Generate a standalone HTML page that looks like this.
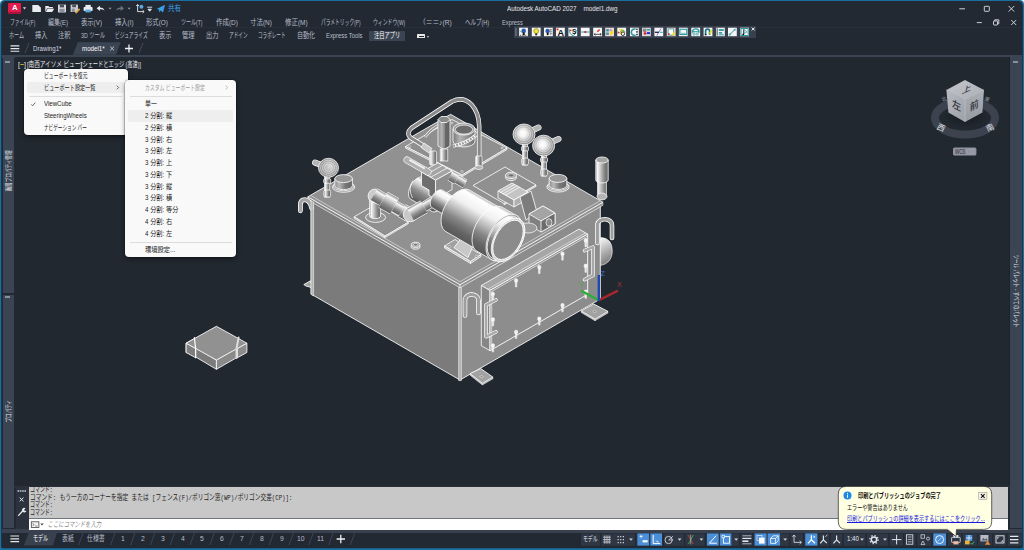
<!DOCTYPE html>
<html lang="ja"><head><meta charset="utf-8"><title>Autodesk AutoCAD 2027 model1.dwg</title>
<style>
*{box-sizing:border-box;margin:0;padding:0}
html,body{width:1024px;height:550px;overflow:hidden;background:#222933}
body{position:relative;font-family:"Liberation Sans","Noto Sans CJK JP",sans-serif;font-size:7.5px;color:#c3c8d2}
.a{position:absolute}
.t{position:absolute;white-space:nowrap;line-height:1;transform-origin:0 50%}
.strip{position:absolute;background:#3b4453}
.menu{position:absolute;background:#f9f9f9;border-radius:4px;box-shadow:0 0 0 .6px rgba(0,0,0,.3),0 2px 5px rgba(0,0,0,.4)}
.sep{position:absolute;height:1px;background:#dadada}
.hl{position:absolute;background:#eeeeee;border-radius:2px}
.sb{position:absolute;top:532.5px;height:13px;background:#4a90d9}
svg{position:absolute;left:0;top:0;overflow:visible}
</style></head><body>
<div class="a" style="left:2px;top:27.2px;width:1020px;height:0.8px;background:#282f3a;"></div>
<div class="a" style="left:2px;top:54.5px;width:1020px;height:3.5px;background:#3b4453;"></div>
<div class="a" style="left:14.5px;top:57.4px;width:995.6px;height:428.1px;background:#1d232b;"></div>
<div class="a" style="left:15.4px;top:57.4px;width:993.4px;height:428.1px;background:#212830;"></div>
<div class="a" style="left:2.6px;top:58px;width:11.9px;height:234.8px;background:#3b4453;"></div>
<div class="a" style="left:2.6px;top:294.9px;width:11.9px;height:233.1px;background:#3b4453;"></div>
<div class="a" style="left:5px;top:61.2px;width:5.2px;height:1.6px;background:#8990a0;"></div>
<div class="a" style="left:5px;top:296.3px;width:5.2px;height:1.6px;background:#8990a0;"></div>
<div class="a" style="left:1010.1px;top:58px;width:11.9px;height:470px;background:#3b4453;"></div>
<div class="a" style="left:1013px;top:61.2px;width:5.2px;height:1.6px;background:#8990a0;"></div>
<div class="a" style="left:369px;top:30.5px;width:36.3px;height:10.8px;background:#3b4453;"></div>
<div class="a" style="left:416.8px;top:34px;width:8.4px;height:4.2px;background:#e8e8e8;border-radius:.5px"></div>
<div class="a" style="left:418.5px;top:35.6px;width:5px;height:1px;background:#222933;"></div>
<div class="a" style="left:427px;top:35.5px;border:1.6px solid transparent;border-top:2px solid #d0d4dc"></div>
<svg width="1024" height="550" viewBox="0 0 1024 550"><polygon points="73,54.8 77.8,42.3 120.7,42.3 116,54.8" fill="#3b4453"/><g stroke="#e6e8ec" stroke-width="1.1"><path d="M10.5 45.9h8.8M10.5 48.6h8.8M10.5 51.3h8.8"/></g><g stroke="#4a5262" stroke-width=".8"><path d="M25 53l4-10M139 53l4-10" /></g><path d="M110.2 46.6l3.8 3.8M114 46.6l-3.8 3.8" stroke="#c3c8d2" stroke-width="1"/><path d="M125 48.5h8M129 44.5v8" stroke="#f0f2f5" stroke-width="1.3"/></svg>
<div class="a" style="left:513.7px;top:26.4px;width:242.4px;height:11.4px;background:#38404e;"></div>
<div class="a" style="left:515px;top:27.8px;width:1.5px;height:8.4px;background:#5c6474;"></div>
<svg width="1024" height="550" viewBox="0 0 1024 550"><g transform="translate(519.1 27.7)"><rect width="8.8" height="8.5" fill="#f6f6f6"/><circle cx="4.6" cy="3.2" r="2.3" fill="#2a5ab0"/><rect x="3.6" y="5" width="2" height="2.4" fill="#111"/><path d="M.8 7.6h7.2" stroke="#111" stroke-width=".8" stroke-dasharray="1 .8"/><path d="M1 3l2 2" stroke="#2a9a50" stroke-width=".8"/></g><g transform="translate(531.8 27.7)"><rect width="8.8" height="8.5" fill="#f6f6f6"/><circle cx="4.4" cy="3.4" r="2.5" fill="#f2e23a" stroke="#7a7a20" stroke-width=".6"/><rect x="3.4" y="5.8" width="2" height="1.8" fill="#222"/></g><g transform="translate(544 27.7)"><rect width="8.8" height="8.5" fill="#f6f6f6"/><circle cx="3.6" cy="3.2" r="2.2" fill="#2a5ab0"/><rect x="2.8" y="5" width="1.8" height="2.4" fill="#111"/><path d="M5.6 2h2.6M5.6 4h2.6M5.6 6h2.6M6.8 1v6.4" stroke="#555" stroke-width=".5"/></g><g transform="translate(556 27.7)"><rect width="8.8" height="8.5" fill="#f6f6f6"/><text x="1.6" y="7.9" font-size="9" font-weight="bold" fill="#111" font-family="Liberation Sans,sans-serif">A</text><rect x=".6" y=".8" width="1.8" height="1.8" fill="#e02020"/></g><g transform="translate(568.4 27.7)"><rect width="8.8" height="8.5" fill="#f6f6f6"/><path d="M.8 1.6Q1 7 5 8Q7.6 6 8 2.4" fill="none" stroke="#2a9aa0" stroke-width="1"/><text x="3.6" y="6.8" font-size="6.5" font-weight="bold" fill="#111" font-family="Liberation Sans,sans-serif">S</text><rect x="1.6" y="2" width="1.4" height="1.4" fill="#e02020"/></g><g transform="translate(580.8 27.7)"><rect width="8.8" height="8.5" fill="#f6f6f6"/><path d="M.4 4.3h8" stroke="#2a9aa0" stroke-width="1"/><rect x="3.6" y="3.4" width="1.8" height="1.8" fill="#e02020"/></g><g transform="translate(593.2 27.7)"><rect width="8.8" height="8.5" fill="#f6f6f6"/><path d="M3.6 3.6l2.4-2.2 1 1-2.4 2.2z" fill="#e03030"/><path d="M1 6.6h7M1 6.6l1.2-1M1 6.6l1.2 1M8 6.6l-1.2-1M8 6.6l-1.2 1" stroke="#111" stroke-width=".7" fill="none"/></g><g transform="translate(605.2 27.7)"><rect width="8.8" height="8.5" fill="#f4d4d4"/><rect x="1" y="1.4" width="2.6" height="2.4" fill="#2a9aa0"/><rect x="1" y="4.8" width="2.6" height="2.4" fill="#2a9aa0"/><path d="M4.6 5.6l3-4 .2 2.6 1 .2-3 3.4z" fill="#f0e020"/><rect x="4.4" y="1.4" width="2" height="2" fill="#8ac"/></g><g transform="translate(617.3 27.7)"><rect width="8.8" height="8.5" fill="#f6f6f6"/><path d="M1.6 1l4.4.6 1.6 2.2-4 2.8z" fill="#f0e040"/><path d="M2 5.6l3-3.4 3 2" fill="none" stroke="#2a9aa0" stroke-width=".8"/><circle cx="5.6" cy="6" r="1.8" fill="none" stroke="#111" stroke-width=".8"/><rect x=".4" y="4" width="1.6" height="1.6" fill="#e02020"/></g><g transform="translate(630 27.7)"><rect width="8.8" height="8.5" fill="#f6f6f6"/><path d="M5.6 1.6A3 3.2 0 1 0 5.6 7.4" fill="none" stroke="#2a9aa0" stroke-width="1.6"/><circle cx="7" cy="1.6" r=".8" fill="#111"/><circle cx="7" cy="4.2" r=".8" fill="#111"/><circle cx="7" cy="6.8" r=".8" fill="#111"/></g><g transform="translate(642 27.7)"><rect width="8.8" height="8.5" fill="#d8d8d8"/><rect x=".8" y="1" width="3.6" height="3" fill="#888"/><path d="M3 3.6v3.6M1.6 5.6h3" stroke="#e02020" stroke-width="1.2"/><rect x="5" y="4.4" width="3" height="2" fill="#2030e0"/><rect x="5" y="1.4" width="3" height="1.4" fill="#2a9aa0"/></g><g transform="translate(654.4 27.7)"><rect width="8.8" height="8.5" fill="#f6f6f6"/><path d="M.6 4.6h4" stroke="#222" stroke-width="1.3"/><path d="M5.4 4.6h3" stroke="#2a9aa0" stroke-width=".9"/><path d="M2.4 8L6.6.8" stroke="#4050e0" stroke-width=".7"/></g><g transform="translate(666.8 27.7)"><rect width="8.8" height="8.5" fill="#f4d4d4"/><path d="M1.4 1.2h5.4v6.2H1.4z" fill="#fff" stroke="#2a9aa0" stroke-width=".8"/><path d="M5 7l2.6-4 .2 2 .8.2-2.4 3.2z" fill="#f0e020"/><rect x="1.2" y="5.6" width="1.6" height="1.6" fill="#e02020"/></g><g transform="translate(678.9 27.7)"><rect width="8.8" height="8.5" fill="#f6f6f6"/><rect x="1" y="1.6" width="6.8" height="5.2" fill="none" stroke="#2a9aa0" stroke-width="1.1"/><path d="M2 5.6h4.6" stroke="#2a9aa0" stroke-width=".6"/></g><g transform="translate(691.3 27.7)"><rect width="8.8" height="8.5" fill="#f6f6f6"/><path d="M1.2 5V4A3.2 2.8 0 0 1 7.6 4V5" fill="none" stroke="#2a9aa0" stroke-width="1.3"/><path d="M1.2 4h6.4" stroke="#2a9aa0" stroke-width="1"/><circle cx="2.8" cy="6.4" r="1.1" fill="none" stroke="#2a9aa0" stroke-width=".7"/><circle cx="6" cy="6.4" r="1.1" fill="none" stroke="#2a9aa0" stroke-width=".7"/></g><g transform="translate(703.6 27.7)"><rect width="8.8" height="8.5" fill="#f6f6f6"/><path d="M2 7V3.4A2 2 0 0 1 6 3.4V7" fill="none" stroke="#1a7a80" stroke-width="1.7"/><path d="M5.6 5l2.4-3.4.2 2 .6.2-2.4 3z" fill="#f0e020"/><rect x="1.2" y="6.4" width="1.6" height="1.2" fill="#111"/></g><g transform="translate(716 27.7)"><rect width="8.8" height="8.5" fill="#f6f6f6"/><rect x=".4" y=".6" width="1.6" height="7.4" fill="#888"/><rect x="2.8" y="1.4" width="5" height="1.8" fill="#2a9aa0"/><rect x="2.8" y="4.4" width="3.4" height="1.6" fill="#2a9aa0"/><rect x="2.8" y="6.6" width="5" height="1" fill="#2a9aa0"/></g><g transform="translate(728 27.7)"><rect width="8.8" height="8.5" fill="#f6f6f6"/><path d="M1.4 7.2L7.4 1.4" stroke="#2a9aa0" stroke-width="1"/><circle cx="1.8" cy="6.8" r=".9" fill="none" stroke="#2a9aa0" stroke-width=".6"/><path d="M7.6 1.2l-2 .4 1.6 1.6z" fill="#2a9aa0"/></g><g transform="translate(740.2 27.7)"><rect width="8.8" height="8.5" fill="#f6f6f6"/><rect x=".8" y=".8" width="7.2" height="7" fill="none" stroke="#2a9aa0" stroke-width="1"/><path d="M3.6 1.6v5" stroke="#111" stroke-width="1"/><path d="M3.6 1.8l3.4 2.4-3.4 1.6" fill="none" stroke="#2a9aa0" stroke-width=".7"/><circle cx="3" cy="6.6" r=".9" fill="#111"/></g></svg>
<svg width="1024" height="550" viewBox="0 0 1024 550"><g stroke="#dfe3ea" stroke-width=".9" fill="none"><path d="M959.3 8.8h5.7"/><rect x="984.3" y="6.3" width="5" height="5" rx=".6"/><path d="M1008.6 6l5.6 5.6M1014.2 6l-5.6 5.6"/><path d="M976.8 22.6h5"/><rect x="993.5" y="21" width="4" height="4" rx=".5"/><path d="M994.8 21v-1.2h4v4h-1.3"/><path d="M1011.2 20l5 5M1016.2 20l-5 5"/><path d="M751.8 27.6l2.8 2.8M754.6 27.6l-2.8 2.8" stroke="#fff" stroke-width="1"/></g></svg>
<div class="a" style="left:8.1px;top:2.8px;width:12.5px;height:11.2px;background:linear-gradient(#e41b52 0,#e01a4f 82%,#a8123b 83%);border-radius:1px"></div>
<svg width="1024" height="550" viewBox="0 0 1024 550"><path d="M22.8 7.2h3.4l-1.7 2.2z" fill="#d0d4dc"/></svg>
<svg width="1024" height="550" viewBox="0 0 1024 550"><path d="M32.3 5.1h5.8l2.8 2.5v4.3h-8.6z" fill="#e9ebee"/><path d="M45.3 6h3l1 1h3.6v1.2h-5.8l-1.8 3.7z M47.6 8.7h6.6l-2 3.3h-6.4z" fill="#e9ebee"/><rect x="58" y="4.6" width="8" height="7.8" fill="#d8dbe0"/><rect x="59.8" y="4.6" width="4.2" height="2.8" fill="#4a505c"/><rect x="59.4" y="8.8" width="5.2" height="3.6" fill="#8a8f99"/><rect x="70.6" y="4.6" width="7.4" height="7.4" fill="#c8ccd3"/><rect x="72.2" y="4.6" width="3.8" height="2.6" fill="#4a505c"/><rect x="71.8" y="8.6" width="3" height="3.4" fill="#8a8f99"/><path d="M75 12.6l4-4.3 1.2 1.2-4 4.3z" fill="#e8a33d"/><rect x="83.6" y="7" width="9" height="4" rx=".8" fill="#e9ebee"/><rect x="85.4" y="4.9" width="5.4" height="2.4" fill="#e9ebee"/><rect x="85.4" y="9.6" width="5.4" height="2.8" fill="#58a8e0"/><path d="M96.6 8.3l3.3-2.6v1.7c2.6 0 4.2 1.2 4.6 3.4-1-1.2-2.5-1.6-4.6-1.6v1.7z" fill="#e9ebee"/><path d="M124 8.3l-3.3-2.6v1.7c-2.6 0-4.2 1.2-4.6 3.4 1-1.2 2.5-1.6 4.6-1.6v1.7z" fill="#6b7382"/><path d="M108.6 7.7h3l-1.5 1.9z M127.6 7.7h3l-1.5 1.9z" fill="#9aa1ae"/><path d="M137.6 4.6v7h6.4M136.2 6l1.4-1.5 1.4 1.5M142.6 10.2l1.5 1.4-1.5 1.4" stroke="#e9ebee" stroke-width=".9" fill="none"/><circle cx="141.4" cy="6.8" r="2" fill="#58a8e0"/><path d="M147.2 7.2h5M148 9.2h3.4l-1.7 2z" stroke="#e9ebee" stroke-width=".9" fill="#e9ebee"/><path d="M156.6 9l8.4-4.2-2 7.6-2.3-2-1.4 1.8-.4-2.6z" fill="#3aa0ea"/></svg>
<div class="a" style="left:2px;top:528.9px;width:1020px;height:4px;background:#39414f;"></div>
<div class="a" style="left:14.3px;top:485.5px;width:995.5px;height:2px;background:#2a303b;"></div>
<div class="a" style="left:15.9px;top:487.4px;width:13.1px;height:41.5px;background:#2b323e;"></div>
<div class="a" style="left:29px;top:487.4px;width:978.6px;height:31px;background:#c8c8c8;"></div>
<div class="a" style="left:29px;top:518.4px;width:978.6px;height:0.9px;background:#70757e;"></div>
<div class="a" style="left:29px;top:519.3px;width:978.6px;height:10.3px;background:#ffffff;"></div>
<svg width="1024" height="550" viewBox="0 0 1024 550"><path d="M17.5 491h9" stroke="#c5c9d1" stroke-width="1.3" stroke-dasharray="1.6 .7"/><path d="M19.7 497.6l3.8 3.8M23.5 497.6l-3.8 3.8" stroke="#e8eaee" stroke-width="1"/><path d="M18.6 515.4l4.3-4.6" stroke="#e8eaee" stroke-width="1.3" stroke-linecap="round"/><path d="M25.6 508.2a2.3 2.3 0 1 0 .9 2.6l-1.7.2-.6-1.3z" fill="#e8eaee"/><rect x="31.3" y="521.8" width="7.6" height="5.6" fill="#f4f4f4" stroke="#444" stroke-width=".8"/><path d="M32.6 523.6l1.6 1-1.6 1M35 526h2.4" stroke="#444" stroke-width=".6" fill="none"/><path d="M40.3 523.6h3.4l-1.7 2z" fill="#444"/></svg>
<div class="a" style="left:2px;top:532.9px;width:1020px;height:14.6px;background:#222933;"></div>
<svg width="1024" height="550" viewBox="0 0 1024 550"><polygon points="23.9,545.4 28.7,532.6 57,532.6 53,545.4" fill="#39414f"/><g stroke="#e6e8ec" stroke-width="1.2"><path d="M10.4 536h8.7M10.4 538.8h8.7M10.4 541.6h8.7"/></g><g stroke="#434b5a" stroke-width=".8"><path d="M78.6 545l4.4-12"/><path d="M110.6 545l4.4-12"/><path d="M130.6 545l4.4-12"/><path d="M150.4 545l4.4-12"/><path d="M170.2 545l4.4-12"/><path d="M190.0 545l4.4-12"/><path d="M209.8 545l4.4-12"/><path d="M229.6 545l4.4-12"/><path d="M249.4 545l4.4-12"/><path d="M269.2 545l4.4-12"/><path d="M289.0 545l4.4-12"/><path d="M308.8 545l4.4-12"/><path d="M328.8 545l4.4-12"/><path d="M350.3 545l4.4-12"/></g><path d="M336.6 539h8.4M340.8 534.8v8.4" stroke="#eef0f3" stroke-width="1.3"/><rect x="581" y="533.6" width="441" height="12.2" fill="#2f3745"/><rect x="637.4" y="533.4" width="11.6" height="12.2" fill="#4a8fd8"/><rect x="650.4" y="533.4" width="11.6" height="12.2" fill="#4a8fd8"/><rect x="707" y="533.4" width="11.7" height="12.2" fill="#4a8fd8"/><rect x="720" y="533.4" width="11.3" height="12.2" fill="#4a8fd8"/><rect x="754.6" y="533.4" width="11.9" height="12.2" fill="#4a8fd8"/><rect x="767.7" y="533.4" width="12.3" height="12.2" fill="#4a8fd8"/><rect x="805.3" y="533.4" width="12.1" height="12.2" fill="#4a8fd8"/><rect x="933.3" y="533.4" width="12.7" height="12.2" fill="#4a8fd8"/><path d="M629.1 538.4h3.8l-1.9 2.3z" fill="#d4d8e0"/><path d="M677.7 538.4h3.8l-1.9 2.3z" fill="#d4d8e0"/><path d="M699.5 538.4h3.8l-1.9 2.3z" fill="#d4d8e0"/><path d="M734.3000000000001 538.4h3.8l-1.9 2.3z" fill="#d4d8e0"/><path d="M783.3000000000001 538.4h3.8l-1.9 2.3z" fill="#d4d8e0"/><path d="M860.1 538.4h3.8l-1.9 2.3z" fill="#d4d8e0"/><path d="M883.1 538.4h3.8l-1.9 2.3z" fill="#d4d8e0"/><path d="M603 537.2h8M603 539.6h8M603 542h8M604.8 535.4v8.4M607 535.4v8.4M609.2 535.4v8.4" stroke="#e4e7ec" stroke-width=".7"/><path d="M617.6 536.6h6.4M617.6 539.6h6.4M617.6 542.6h6.4" stroke="#e4e7ec" stroke-width="1.1" stroke-dasharray="1.1 1.5"/><path d="M639.6 536.4h3M641.1 534.9v3" stroke="#fff" stroke-width=".8"/><rect x="642.6" y="540.2" width="5" height="2.2" fill="#fff"/><path d="M653.2 535v8.6h7" stroke="#fff" stroke-width="1" fill="none"/><path d="M655.6 541.2h2.4v2.4" stroke="#fff" stroke-width=".6" fill="none"/><circle cx="668.6" cy="540" r="3.6" fill="none" stroke="#e4e7ec" stroke-width=".8"/><path d="M668.6 540l4.4-3.8M668.6 540h4.6" stroke="#e4e7ec" stroke-width=".7"/><path d="M688 535l5.2 9" stroke="#d04040" stroke-width=".9"/><path d="M693.4 535l-5 9" stroke="#40b050" stroke-width=".9"/><path d="M690.7 534.6v9.8" stroke="#c8ccd4" stroke-width=".6"/><path d="M709.4 543.2l6.8-7.6M709.4 543.2h7.4" stroke="#fff" stroke-width="1" fill="none"/><rect x="723.4" y="536.6" width="6" height="6.6" fill="none" stroke="#fff" stroke-width=".9"/><rect x="722" y="535.2" width="2.6" height="2.6" fill="#4a8fd8" stroke="#fff" stroke-width=".7"/><path d="M742.4 535.8h9" stroke="#e4e7ec" stroke-width=".7"/><path d="M742.4 538.4h9" stroke="#e4e7ec" stroke-width="1.2"/><path d="M742.4 541.2h6" stroke="#e4e7ec" stroke-width="1.6"/><path d="M742.4 543.8h9" stroke="#e4e7ec" stroke-width=".7"/><rect x="757" y="535.6" width="5" height="5" fill="none" stroke="#dfe9f6" stroke-width=".7"/><rect x="759" y="537.6" width="5.6" height="6" fill="#fff"/><path d="M770.6 538.4l2.6-2.6h5v5l-2.6 2.6h-5z M770.6 538.4h5v5M775.6 538.4l2.6-2.6" fill="none" stroke="#fff" stroke-width=".8"/><path d="M794 535v7.4h7.4M792.4 536.8l1.6-1.8 1.6 1.8M799.6 540.8l1.8 1.6-1.8 1.6" fill="none" stroke="#e4e7ec" stroke-width=".8"/><path d="M811.4 535.2v4.6l-3.4 3.6M811.4 539.8l3.6 3.4" stroke="#fff" stroke-width="1.3" fill="none"/><path d="M813.6 535.6l1.8 1.4-1.8 1z" fill="#fff"/><path d="M823.4 535.4v4.4l-3.2 3.6M823.4 539.8l3.4 3.4" stroke="#e4e7ec" stroke-width="1.2" fill="none"/><path d="M825.4 536.6l2-1.6" stroke="#e4e7ec" stroke-width=".8"/><path d="M836.6 535.4v4.4l-3.2 3.6M836.6 539.8l3.4 3.4" stroke="#e4e7ec" stroke-width="1.2" fill="none"/><circle cx="874" cy="539.6" r="2.7" fill="none" stroke="#e4e7ec" stroke-width="1.5"/><circle cx="874" cy="539.6" r="4.1" fill="none" stroke="#e4e7ec" stroke-width="1.3" stroke-dasharray="1.3 1.92"/><path d="M891.8 539.6h9.6M896.6 534.8v9.6" stroke="#e4e7ec" stroke-width="1"/><rect x="906.6" y="534.8" width="6.2" height="9.4" fill="none" stroke="#e4e7ec" stroke-width=".8"/><path d="M907.8 537h3.8M907.8 539.4h3.8M907.8 541.8h3.8" stroke="#e4e7ec" stroke-width=".7"/><rect x="921" y="534.8" width="3.4" height="3.4" fill="none" stroke="#e4e7ec" stroke-width=".7"/><circle cx="928" cy="538.6" r="1.5" fill="none" stroke="#e4e7ec" stroke-width=".7"/><path d="M921 544.6l1.9-3.6 1.9 3.6z" fill="none" stroke="#e4e7ec" stroke-width=".7"/><circle cx="939.6" cy="539.6" r="4" fill="none" stroke="#fff" stroke-width=".9"/><path d="M937.6 541.6l4-4" stroke="#dfe9f6" stroke-width=".7"/><rect x="951.6" y="537.4" width="8.6" height="5" rx=".6" fill="none" stroke="#e4e7ec" stroke-width=".8"/><rect x="953.4" y="535" width="5" height="2.4" fill="#e4e7ec"/><rect x="953.4" y="541.2" width="5" height="3.2" fill="#f0b8a0"/><rect x="965.8" y="535" width="6.4" height="6" fill="#4a8fd8"/><path d="M969 535v6M965.8 538h6.4" stroke="#fff" stroke-width=".7"/><rect x="965" y="540.4" width="4.6" height="4" fill="#e8b040"/><path d="M970.6 543l1.3 1.3 2.2-2.6" stroke="#40c060" stroke-width=".9" fill="none"/><rect x="980.4" y="535" width="8" height="6.4" fill="#b8bcc4"/><path d="M981.4 540.4l2-2.6 1.6 1.6 1.4-1.4 1.6 2.4z" fill="#5a6270"/><path d="M985 544.8l2.6-4.4 2.6 4.4z" fill="#e88a3a"/><rect x="996" y="535.8" width="8" height="7.2" fill="none" stroke="#e4e7ec" stroke-width=".9"/><path d="M997.4 539v-1.8h1.8M1002.6 540v1.8h-1.8" stroke="#e4e7ec" stroke-width=".7" fill="none"/><path d="M1010 536.4h8.4M1010 539.6h8.4M1010 542.8h8.4" stroke="#e4e7ec" stroke-width="1.2"/><g stroke="#222933" stroke-width="1.4"><path d="M580.2 533v13"/><path d="M600.6 533v13"/><path d="M635.6 533v13"/><path d="M663.4 533v13"/><path d="M684.6 533v13"/><path d="M705.4 533v13"/><path d="M739.8 533v13"/><path d="M753 533v13"/><path d="M789.6 533v13"/><path d="M803.6 533v13"/><path d="M818.8 533v13"/><path d="M830 533v13"/><path d="M843 533v13"/><path d="M866.2 533v13"/><path d="M889 533v13"/><path d="M903.8 533v13"/><path d="M916.4 533v13"/><path d="M932 533v13"/><path d="M947.4 533v13"/><path d="M962 533v13"/><path d="M977.6 533v13"/><path d="M992.6 533v13"/><path d="M1007 533v13"/></g></svg>
<svg width="1024" height="550" viewBox="0 0 1024 550"><defs><linearGradient id="g1" gradientUnits="userSpaceOnUse" x1="600.0" y1="240.0" x2="612.0" y2="262.0"><stop offset="0" stop-color="#f0f0f0"/><stop offset="0.5" stop-color="#b0b0b0"/><stop offset="1" stop-color="#787878"/></linearGradient><linearGradient id="g2" gradientUnits="userSpaceOnUse" x1="453.0" y1="0.0" x2="476.0" y2="0.0"><stop offset="0" stop-color="#7a7a7a"/><stop offset="0.3" stop-color="#b4b4b4"/><stop offset="1" stop-color="#6a6a6a"/></linearGradient><linearGradient id="g3" gradientUnits="userSpaceOnUse" x1="438.0" y1="0.0" x2="450.0" y2="0.0"><stop offset="0" stop-color="#8a8a8a"/><stop offset="0.3" stop-color="#b4b4b4"/><stop offset="0.55" stop-color="#8a8a8a"/><stop offset="0.56" stop-color="#6a6a6a"/><stop offset="1" stop-color="#606060"/></linearGradient><linearGradient id="g4" gradientUnits="userSpaceOnUse" x1="440.0" y1="0.0" x2="448.0" y2="0.0"><stop offset="0" stop-color="#8a8a8a"/><stop offset="0.16" stop-color="#fafafa"/><stop offset="0.36" stop-color="#cccccc"/><stop offset="0.68" stop-color="#868686"/><stop offset="1" stop-color="#626262"/></linearGradient><linearGradient id="g5" gradientUnits="userSpaceOnUse" x1="475.5" y1="0.0" x2="482.0" y2="0.0"><stop offset="0" stop-color="#8a8a8a"/><stop offset="0.16" stop-color="#fafafa"/><stop offset="0.36" stop-color="#cccccc"/><stop offset="0.68" stop-color="#868686"/><stop offset="1" stop-color="#626262"/></linearGradient><linearGradient id="g6" gradientUnits="userSpaceOnUse" x1="429.5" y1="0.0" x2="437.0" y2="0.0"><stop offset="0" stop-color="#8a8a8a"/><stop offset="0.16" stop-color="#fafafa"/><stop offset="0.36" stop-color="#cccccc"/><stop offset="0.68" stop-color="#868686"/><stop offset="1" stop-color="#626262"/></linearGradient><linearGradient id="g7" gradientUnits="userSpaceOnUse" x1="324.2" y1="0.0" x2="330.2" y2="0.0"><stop offset="0" stop-color="#8a8a8a"/><stop offset="0.16" stop-color="#fafafa"/><stop offset="0.36" stop-color="#cccccc"/><stop offset="0.68" stop-color="#868686"/><stop offset="1" stop-color="#626262"/></linearGradient><radialGradient id="g8" gradientUnits="userSpaceOnUse" cx="329.5" cy="166.8" r="10.0"><stop offset="0" stop-color="#dcdcdc"/><stop offset="0.5" stop-color="#b0b0b0"/><stop offset="1" stop-color="#8e8e8e"/></radialGradient><linearGradient id="g9" gradientUnits="userSpaceOnUse" x1="334.6" y1="0.0" x2="352.6" y2="0.0"><stop offset="0" stop-color="#8a8a8a"/><stop offset="0.25" stop-color="#b8b8b8"/><stop offset="0.6" stop-color="#777"/><stop offset="1" stop-color="#666"/></linearGradient><linearGradient id="g10" gradientUnits="userSpaceOnUse" x1="369.5" y1="0.0" x2="381.0" y2="0.0"><stop offset="0" stop-color="#8a8a8a"/><stop offset="0.16" stop-color="#fafafa"/><stop offset="0.36" stop-color="#cccccc"/><stop offset="0.68" stop-color="#868686"/><stop offset="1" stop-color="#626262"/></linearGradient><linearGradient id="g11" gradientUnits="userSpaceOnUse" x1="423.0" y1="177.6" x2="411.0" y2="198.4"><stop offset="0" stop-color="#8a8a8a"/><stop offset="0.14" stop-color="#f6f6f6"/><stop offset="0.34" stop-color="#cfcfcf"/><stop offset="0.6" stop-color="#8c8c8c"/><stop offset="1" stop-color="#5c5c5c"/></linearGradient><linearGradient id="g12" gradientUnits="userSpaceOnUse" x1="377.2" y1="189.0" x2="370.8" y2="200.0"><stop offset="0" stop-color="#8a8a8a"/><stop offset="0.16" stop-color="#fafafa"/><stop offset="0.36" stop-color="#cccccc"/><stop offset="0.68" stop-color="#868686"/><stop offset="1" stop-color="#626262"/></linearGradient><linearGradient id="g13" gradientUnits="userSpaceOnUse" x1="387.3" y1="192.2" x2="378.7" y2="207.2"><stop offset="0" stop-color="#8a8a8a"/><stop offset="0.16" stop-color="#fafafa"/><stop offset="0.36" stop-color="#cccccc"/><stop offset="0.68" stop-color="#868686"/><stop offset="1" stop-color="#626262"/></linearGradient><linearGradient id="g14" gradientUnits="userSpaceOnUse" x1="397.3" y1="201.4" x2="391.7" y2="211.2"><stop offset="0" stop-color="#8a8a8a"/><stop offset="0.16" stop-color="#fafafa"/><stop offset="0.36" stop-color="#cccccc"/><stop offset="0.68" stop-color="#868686"/><stop offset="1" stop-color="#626262"/></linearGradient><linearGradient id="g15" gradientUnits="userSpaceOnUse" x1="405.4" y1="204.7" x2="398.6" y2="216.5"><stop offset="0" stop-color="#8a8a8a"/><stop offset="0.16" stop-color="#fafafa"/><stop offset="0.36" stop-color="#cccccc"/><stop offset="0.68" stop-color="#868686"/><stop offset="1" stop-color="#626262"/></linearGradient><linearGradient id="g16" gradientUnits="userSpaceOnUse" x1="407.2" y1="208.8" x2="413.8" y2="220.2"><stop offset="0" stop-color="#8a8a8a"/><stop offset="0.16" stop-color="#fafafa"/><stop offset="0.36" stop-color="#cccccc"/><stop offset="0.68" stop-color="#868686"/><stop offset="1" stop-color="#626262"/></linearGradient><linearGradient id="g17" gradientUnits="userSpaceOnUse" x1="421.7" y1="202.7" x2="426.3" y2="210.7"><stop offset="0" stop-color="#8a8a8a"/><stop offset="0.16" stop-color="#fafafa"/><stop offset="0.36" stop-color="#cccccc"/><stop offset="0.68" stop-color="#868686"/><stop offset="1" stop-color="#626262"/></linearGradient><linearGradient id="g18" gradientUnits="userSpaceOnUse" x1="0.0" y1="153.0" x2="0.0" y2="166.0"><stop offset="0" stop-color="#8a8a8a"/><stop offset="0.16" stop-color="#fafafa"/><stop offset="0.36" stop-color="#cccccc"/><stop offset="0.68" stop-color="#868686"/><stop offset="1" stop-color="#626262"/></linearGradient><linearGradient id="g19" gradientUnits="userSpaceOnUse" x1="453.1" y1="171.0" x2="447.9" y2="180.0"><stop offset="0" stop-color="#8a8a8a"/><stop offset="0.16" stop-color="#fafafa"/><stop offset="0.36" stop-color="#cccccc"/><stop offset="0.68" stop-color="#868686"/><stop offset="1" stop-color="#626262"/></linearGradient><linearGradient id="g20" gradientUnits="userSpaceOnUse" x1="459.1" y1="175.6" x2="454.9" y2="182.8"><stop offset="0" stop-color="#8a8a8a"/><stop offset="0.16" stop-color="#fafafa"/><stop offset="0.36" stop-color="#cccccc"/><stop offset="0.68" stop-color="#868686"/><stop offset="1" stop-color="#626262"/></linearGradient><linearGradient id="g21" gradientUnits="userSpaceOnUse" x1="442.7" y1="190.3" x2="432.4" y2="208.1"><stop offset="0" stop-color="#b0b0b0"/><stop offset="0.06" stop-color="#ffffff"/><stop offset="0.3" stop-color="#f0f0f0"/><stop offset="0.48" stop-color="#bcbcbc"/><stop offset="0.66" stop-color="#868686"/><stop offset="0.85" stop-color="#646464"/><stop offset="1" stop-color="#585858"/></linearGradient><linearGradient id="g22" gradientUnits="userSpaceOnUse" x1="470.0" y1="190.3" x2="446.0" y2="231.7"><stop offset="0" stop-color="#b0b0b0"/><stop offset="0.06" stop-color="#ffffff"/><stop offset="0.3" stop-color="#f0f0f0"/><stop offset="0.48" stop-color="#bcbcbc"/><stop offset="0.66" stop-color="#868686"/><stop offset="0.85" stop-color="#646464"/><stop offset="1" stop-color="#585858"/></linearGradient><linearGradient id="g23" gradientUnits="userSpaceOnUse" x1="502.7" y1="207.5" x2="477.3" y2="251.5"><stop offset="0" stop-color="#b0b0b0"/><stop offset="0.06" stop-color="#ffffff"/><stop offset="0.3" stop-color="#f0f0f0"/><stop offset="0.48" stop-color="#bcbcbc"/><stop offset="0.66" stop-color="#868686"/><stop offset="0.85" stop-color="#646464"/><stop offset="1" stop-color="#585858"/></linearGradient><linearGradient id="g24" gradientUnits="userSpaceOnUse" x1="515.8" y1="217.1" x2="492.2" y2="258.1"><stop offset="0" stop-color="#b0b0b0"/><stop offset="0.06" stop-color="#ffffff"/><stop offset="0.3" stop-color="#f0f0f0"/><stop offset="0.48" stop-color="#bcbcbc"/><stop offset="0.66" stop-color="#868686"/><stop offset="0.85" stop-color="#646464"/><stop offset="1" stop-color="#585858"/></linearGradient><linearGradient id="g25" gradientUnits="userSpaceOnUse" x1="522.0" y1="0.0" x2="528.0" y2="0.0"><stop offset="0" stop-color="#8a8a8a"/><stop offset="0.16" stop-color="#fafafa"/><stop offset="0.36" stop-color="#cccccc"/><stop offset="0.68" stop-color="#868686"/><stop offset="1" stop-color="#626262"/></linearGradient><radialGradient id="g26" gradientUnits="userSpaceOnUse" cx="523.0" cy="133.4" r="11.0"><stop offset="0" stop-color="#ffffff"/><stop offset="0.3" stop-color="#f4f4f4"/><stop offset="0.65" stop-color="#b8b8b8"/><stop offset="1" stop-color="#8a8a8a"/></radialGradient><linearGradient id="g27" gradientUnits="userSpaceOnUse" x1="541.0" y1="0.0" x2="547.0" y2="0.0"><stop offset="0" stop-color="#8a8a8a"/><stop offset="0.16" stop-color="#fafafa"/><stop offset="0.36" stop-color="#cccccc"/><stop offset="0.68" stop-color="#868686"/><stop offset="1" stop-color="#626262"/></linearGradient><radialGradient id="g28" gradientUnits="userSpaceOnUse" cx="542.6" cy="144.6" r="11.0"><stop offset="0" stop-color="#ffffff"/><stop offset="0.3" stop-color="#f4f4f4"/><stop offset="0.65" stop-color="#b8b8b8"/><stop offset="1" stop-color="#8a8a8a"/></radialGradient><linearGradient id="g29" gradientUnits="userSpaceOnUse" x1="549.0" y1="0.0" x2="567.0" y2="0.0"><stop offset="0" stop-color="#8a8a8a"/><stop offset="0.25" stop-color="#b8b8b8"/><stop offset="0.6" stop-color="#777"/><stop offset="1" stop-color="#666"/></linearGradient><linearGradient id="g30" gradientUnits="userSpaceOnUse" x1="595.5" y1="0.0" x2="608.5" y2="0.0"><stop offset="0" stop-color="#8a8a8a"/><stop offset="0.16" stop-color="#fafafa"/><stop offset="0.36" stop-color="#cccccc"/><stop offset="0.68" stop-color="#868686"/><stop offset="1" stop-color="#626262"/></linearGradient></defs>
<polygon points="186.1,343.2 195.1,338.2 196.1,354.0 186.1,352.5" fill="#8a8a8a" stroke="#ffffff" stroke-width="0.85" stroke-linejoin="round" />
<polygon points="186.1,343.2 195.6,348.4 195.6,357.7 186.1,352.5" fill="#7f7f7f" stroke="#ffffff" stroke-width="0.85" stroke-linejoin="round" />
<polygon points="246.9,343.2 237.4,348.4 237.4,357.7 246.9,352.5" fill="#8c8c8c" stroke="#ffffff" stroke-width="0.85" stroke-linejoin="round" />
<polygon points="237.4,348.4 234.9,347.0 234.9,356.3 237.4,357.7" fill="#d8d8d8" stroke="#ffffff" stroke-width="0.4" stroke-linejoin="round" />
<polygon points="195.6,347.6 216.4,360.0 216.4,369.3 195.6,356.9" fill="#7b7b7b" stroke="#ffffff" stroke-width="0.85" stroke-linejoin="round" />
<polygon points="237.3,348.0 216.4,360.0 216.4,369.3 237.3,357.3" fill="#8a8a8a" stroke="#ffffff" stroke-width="0.85" stroke-linejoin="round" />
<polygon points="216.4,326.3 246.9,343.2 237.4,348.4 216.4,360.0 195.6,348.4 186.1,343.2" fill="#919191" stroke="#ffffff" stroke-width="0.85" stroke-linejoin="round" />
<polyline points="195.6,357.7 195.6,348.4 194.4,337.6" fill="none" stroke="#ffffff" stroke-width="1.2" stroke-linecap="round" stroke-linejoin="round" />
<polyline points="236.5,358.1 236.5,348.8 238.6,337.6" fill="none" stroke="#dcdcdc" stroke-width="2" stroke-linecap="round" stroke-linejoin="round" />
<polygon points="460.0,380.0 311.0,294.0 311.0,201.0 460.0,287.0" fill="#7b7b7b" stroke="#ffffff" stroke-width="0.85" stroke-linejoin="round" />
<polygon points="460.0,380.0 600.3,299.0 600.3,206.0 460.0,287.0" fill="#8c8c8c" stroke="#ffffff" stroke-width="0.85" stroke-linejoin="round" />
<polygon points="460.0,287.8 307.8,199.9 307.8,196.8 460.0,284.7" fill="#868686" stroke="#ffffff" stroke-width="0.6" stroke-linejoin="round" />
<polygon points="460.0,287.8 602.9,205.3 602.9,202.2 460.0,284.7" fill="#909090" stroke="#ffffff" stroke-width="0.6" stroke-linejoin="round" />
<polygon points="458.6,287.4 461.4,287.4 461.4,380.6 458.6,380.6" fill="#b4b4b4" stroke="#ffffff" stroke-width="0.5" stroke-linejoin="round" />
<polygon points="460.0,284.7 602.9,202.2 450.6,114.3 307.8,196.8" fill="#919191" stroke="#ffffff" stroke-width="0.85" stroke-linejoin="round" />
<polyline points="311.2,195.8 460.0,281.7 599.4,201.2" fill="none" stroke="#ffffff" stroke-width="0.5" stroke-linecap="round" stroke-linejoin="round" />
<polygon points="470.0,373.6 480.8,368.6 493.0,377.2 482.4,383.4" fill="#a2a2a2" stroke="#ffffff" stroke-width="0.85" stroke-linejoin="round" />
<polygon points="470.0,373.6 482.4,383.4 482.4,385.0 470.0,375.2" fill="#c8c8c8" stroke="#ffffff" stroke-width="0.4" stroke-linejoin="round" />
<polygon points="493.0,377.2 482.4,383.4 482.4,385.0 493.0,378.8" fill="#b8b8b8" stroke="#ffffff" stroke-width="0.4" stroke-linejoin="round" />
<ellipse cx="481.5" cy="376.6" rx="1.5" ry=".9" fill="#777" stroke="#fff" stroke-width=".5"/>
<polygon points="581.2,311.0 593.6,304.0 608.0,311.4 595.0,319.2" fill="#a2a2a2" stroke="#ffffff" stroke-width="0.85" stroke-linejoin="round" />
<polygon points="581.2,311.0 595.0,319.2 595.0,320.8 581.2,312.6" fill="#c8c8c8" stroke="#ffffff" stroke-width="0.4" stroke-linejoin="round" />
<polygon points="608.0,311.4 595.0,319.2 595.0,320.8 608.0,313.0" fill="#b8b8b8" stroke="#ffffff" stroke-width="0.4" stroke-linejoin="round" />
<ellipse cx="594.6" cy="311.6" rx="1.5" ry=".9" fill="#777" stroke="#fff" stroke-width=".5"/>
<polygon points="303.8,284.6 310.5,280.8 312.5,287.8 306.0,286.0" fill="#a2a2a2" stroke="#ffffff" stroke-width="0.85" stroke-linejoin="round" />
<polygon points="481.3,285.5 579.0,229.1 587.7,234.1 490.0,290.5" fill="#a6a6a6" stroke="#ffffff" stroke-width="0.8" stroke-linejoin="round" />
<polygon points="481.3,345.7 490.0,350.7 490.0,290.5 481.3,285.5" fill="#868686" stroke="#ffffff" stroke-width="0.8" stroke-linejoin="round" />
<polygon points="490.0,350.7 587.7,294.3 587.7,234.1 490.0,290.5" fill="#8d8d8d" stroke="#ffffff" stroke-width="0.9" stroke-linejoin="round" />
<polyline points="491.7,349.7 491.7,291.5 587.7,236.1" fill="none" stroke="#ffffff" stroke-width="0.6" stroke-linecap="round" stroke-linejoin="round" />
<polyline points="487.8,289.2 585.5,232.9" fill="none" stroke="#ffffff" stroke-width="0.5" stroke-linecap="round" stroke-linejoin="round" />
<rect x="492.1" y="295.5" width="1.6" height="5" rx=".5" fill="#e4e4e4" stroke="#fff" stroke-width=".45"/>
<rect x="491.3" y="292.2" width="3.2" height="3.6" rx="1.3" fill="#f2f2f2" stroke="#fff" stroke-width=".5"/>
<rect x="515.3" y="282.1" width="1.6" height="5" rx=".5" fill="#e4e4e4" stroke="#fff" stroke-width=".45"/>
<rect x="514.5" y="278.8" width="3.2" height="3.6" rx="1.3" fill="#f2f2f2" stroke="#fff" stroke-width=".5"/>
<rect x="538.5" y="268.7" width="1.6" height="5" rx=".5" fill="#e4e4e4" stroke="#fff" stroke-width=".45"/>
<rect x="537.7" y="265.4" width="3.2" height="3.6" rx="1.3" fill="#f2f2f2" stroke="#fff" stroke-width=".5"/>
<rect x="561.7" y="255.3" width="1.6" height="5" rx=".5" fill="#e4e4e4" stroke="#fff" stroke-width=".45"/>
<rect x="560.9" y="252.0" width="3.2" height="3.6" rx="1.3" fill="#f2f2f2" stroke="#fff" stroke-width=".5"/>
<rect x="584.9" y="241.9" width="1.6" height="5" rx=".5" fill="#e4e4e4" stroke="#fff" stroke-width=".45"/>
<rect x="584.1" y="238.6" width="3.2" height="3.6" rx="1.3" fill="#f2f2f2" stroke="#fff" stroke-width=".5"/>
<rect x="492.1" y="347.0" width="1.6" height="5" rx=".5" fill="#e4e4e4" stroke="#fff" stroke-width=".45"/>
<rect x="491.3" y="343.7" width="3.2" height="3.6" rx="1.3" fill="#f2f2f2" stroke="#fff" stroke-width=".5"/>
<rect x="515.3" y="333.6" width="1.6" height="5" rx=".5" fill="#e4e4e4" stroke="#fff" stroke-width=".45"/>
<rect x="514.5" y="330.3" width="3.2" height="3.6" rx="1.3" fill="#f2f2f2" stroke="#fff" stroke-width=".5"/>
<rect x="538.5" y="320.2" width="1.6" height="5" rx=".5" fill="#e4e4e4" stroke="#fff" stroke-width=".45"/>
<rect x="537.7" y="316.9" width="3.2" height="3.6" rx="1.3" fill="#f2f2f2" stroke="#fff" stroke-width=".5"/>
<rect x="561.7" y="306.8" width="1.6" height="5" rx=".5" fill="#e4e4e4" stroke="#fff" stroke-width=".45"/>
<rect x="560.9" y="303.5" width="3.2" height="3.6" rx="1.3" fill="#f2f2f2" stroke="#fff" stroke-width=".5"/>
<rect x="584.9" y="293.4" width="1.6" height="5" rx=".5" fill="#e4e4e4" stroke="#fff" stroke-width=".45"/>
<rect x="584.1" y="290.1" width="3.2" height="3.6" rx="1.3" fill="#f2f2f2" stroke="#fff" stroke-width=".5"/>
<rect x="492.1" y="321.0" width="1.6" height="5" rx=".5" fill="#e4e4e4" stroke="#fff" stroke-width=".45"/>
<rect x="491.3" y="317.7" width="3.2" height="3.6" rx="1.3" fill="#f2f2f2" stroke="#fff" stroke-width=".5"/>
<rect x="584.9" y="267.4" width="1.6" height="5" rx=".5" fill="#e4e4e4" stroke="#fff" stroke-width=".45"/>
<rect x="584.1" y="264.1" width="3.2" height="3.6" rx="1.3" fill="#f2f2f2" stroke="#fff" stroke-width=".5"/>
<polyline points="495.9,300.0 486.0,304.9 486.0,336.8 495.9,331.9" fill="none" stroke="#ffffff" stroke-width="3.6" stroke-linecap="round" stroke-linejoin="round" />
<polyline points="495.9,300.0 486.0,304.9 486.0,336.8 495.9,331.9" fill="none" stroke="#a8a8a8" stroke-width="2.3" stroke-linecap="round" stroke-linejoin="round" />
<polyline points="584.6,250.6 593.0,247.1 593.0,275.4 584.6,279.6" fill="none" stroke="#ffffff" stroke-width="3.6" stroke-linecap="round" stroke-linejoin="round" />
<polyline points="584.6,250.6 593.0,247.1 593.0,275.4 584.6,279.6" fill="none" stroke="#a8a8a8" stroke-width="2.3" stroke-linecap="round" stroke-linejoin="round" />
<path d="M465.0 315.5V299.4A6.8 6.0 0 0 1 478.5 300.4V313.0" fill="none" stroke="#ffffff" stroke-width="4.6" stroke-linecap="round"/>
<path d="M465.0 315.5V299.4A6.8 6.0 0 0 1 478.5 300.4V313.0" fill="none" stroke="#9e9e9e" stroke-width="3.1" stroke-linecap="round"/>
<path d="M600.6 237.5Q612.5 238 612.3 251.5Q612 263 600.6 265.5Z" fill="url(#g1)" stroke="#ffffff" stroke-width=".6"/>
<path d="M597.4 243.0V224.3A7.3 5.5 0 0 1 612.0 225.3V238.0" fill="none" stroke="#ffffff" stroke-width="4.6" stroke-linecap="round"/>
<path d="M597.4 243.0V224.3A7.3 5.5 0 0 1 612.0 225.3V238.0" fill="none" stroke="#9e9e9e" stroke-width="3.1" stroke-linecap="round"/>
<path d="M300.4 210.8V204.8Q300.4 199.8 304.8 199.6Q308.4 199.8 310.6 204.4L311.6 208" fill="none" stroke="#ffffff" stroke-width="4.8" stroke-linecap="round"/>
<path d="M300.4 210.8V204.8Q300.4 199.8 304.8 199.6Q308.4 199.8 310.6 204.4L311.6 208" fill="none" stroke="#a4a4a4" stroke-width="3.3" stroke-linecap="round"/>
<polygon points="311.0,200.6 313.6,202.0 313.6,296.0 311.0,294.4" fill="#b4b4b4" stroke="#ffffff" stroke-width="0.5" stroke-linejoin="round" />
<polygon points="405.5,146.5 452.0,119.5 507.0,148.0 462.0,175.0" fill="#8f8f8f" stroke="#ffffff" stroke-width="0.8" stroke-linejoin="round" />
<polygon points="405.5,146.5 462.0,175.0 462.0,176.6 405.5,148.1" fill="#b0b0b0" stroke="#ffffff" stroke-width="0.75" stroke-linejoin="round" />
<polygon points="507.0,148.0 462.0,175.0 462.0,176.6 507.0,149.6" fill="#b8b8b8" stroke="#ffffff" stroke-width="0.75" stroke-linejoin="round" />
<ellipse cx="409.5" cy="146.7" rx="1.3" ry=".8" fill="#777" stroke="#fff" stroke-width=".55"/>
<ellipse cx="452" cy="123" rx="1.3" ry=".8" fill="#777" stroke="#fff" stroke-width=".55"/>
<ellipse cx="502" cy="148" rx="1.3" ry=".8" fill="#777" stroke="#fff" stroke-width=".55"/>
<ellipse cx="462" cy="171.5" rx="1.3" ry=".8" fill="#777" stroke="#fff" stroke-width=".55"/>
<path d="M453 129V141A11 6 0 0 0 475 141V129Z" fill="url(#g2)" stroke="#ffffff" stroke-width=".8"/>
<ellipse cx="464" cy="129" rx="11" ry="6" fill="#a0a0a0" stroke="#ffffff" stroke-width=".8"/>
<ellipse cx="464" cy="129.6" rx="8.6" ry="4.5" fill="#6c6c6c" stroke="#ffffff" stroke-width=".7"/>
<path d="M428 148.5L411 138Q405.5 133.5 411.5 128L452 101.5Q463 96 471.5 104.5Q479 113 479.2 126V157" fill="none" stroke="#ffffff" stroke-width="4.5" stroke-linejoin="round"/>
<path d="M428 148.5L411 138Q405.5 133.5 411.5 128L452 101.5Q463 96 471.5 104.5Q479 113 479.2 126V157" fill="none" stroke="#8a8a8a" stroke-width="3.1" stroke-linejoin="round"/>
<path d="M425 137Q432 128 441 124" fill="none" stroke="#ffffff" stroke-width="2.6"/><path d="M425 137Q432 128 441 124" fill="none" stroke="#9a9a9a" stroke-width="1.5"/>
<path d="M453 146Q468 143 476 135" fill="none" stroke="#ffffff" stroke-width="3.6"/><path d="M453 146Q468 143 476 135" fill="none" stroke="#a4a4a4" stroke-width="2.4" stroke-dasharray="2 1"/>
<path d="M438 119.5V146L444 149.5L450 146V119.5Z" fill="url(#g3)" stroke="#ffffff" stroke-width=".8"/>
<path d="M438 119.5L441 116.5H447L450 119.5L447 122.5H441Z" fill="#8a8a8a" stroke="#ffffff" stroke-width=".8"/>
<rect x="440.2" y="149" width="7.6" height="12" fill="url(#g4)" stroke="#ffffff" stroke-width=".7"/>
<rect x="475.6" y="156" width="6.4" height="11" rx="1.2" fill="url(#g5)" stroke="#ffffff" stroke-width=".7"/>
<ellipse cx="478.8" cy="167.5" rx="4" ry="2" fill="#b0b0b0" stroke="#ffffff" stroke-width=".7"/>
<path d="M424 143L432 148.5L429 153L421 147.5Z" fill="#c8c8c8" stroke="#ffffff" stroke-width=".7"/>
<rect x="429.6" y="151" width="7" height="14" rx="1.4" fill="url(#g6)" stroke="#ffffff" stroke-width=".7"/>
<rect x="324.6" y="175.8" width="5.2" height="21.2" fill="url(#g7)" stroke="#ffffff" stroke-width=".7"/>
<rect x="323.7" y="178.8" width="7" height="4.5" rx="1" fill="url(#g7)" stroke="#ffffff" stroke-width=".7"/>
<rect x="323.8" y="190.0" width="6.8" height="7" rx="1.6" fill="url(#g7)" stroke="#ffffff" stroke-width=".7"/>
<line x1="328.5" y1="167.8" x2="315.0" y2="162.6" stroke="#ffffff" stroke-width="6" stroke-linecap="round"/>
<line x1="328.5" y1="167.8" x2="315.0" y2="162.6" stroke="#b4b4b4" stroke-width="4.8" stroke-linecap="round"/>
<ellipse cx="328.5" cy="167.8" rx="10.0" ry="9.5" fill="url(#g8)" stroke="#ffffff" stroke-width=".8"/>
<ellipse cx="328.5" cy="167.8" rx="8.0" ry="7.6" fill="none" stroke="#fff" stroke-width=".55" opacity=".8"/>
<ellipse cx="328.5" cy="167.8" rx="6.0" ry="5.7" fill="none" stroke="#fff" stroke-width=".55" opacity=".8"/>
<ellipse cx="328.5" cy="167.8" rx="4.0" ry="3.8" fill="none" stroke="#fff" stroke-width=".55" opacity=".8"/>
<ellipse cx="343.6" cy="187.1" rx="11.2" ry="5.2" fill="#9a9a9a" stroke="#ffffff" stroke-width=".8"/>
<ellipse cx="343.6" cy="186.1" rx="10.2" ry="4.6" fill="#8f8f8f" stroke="#ffffff" stroke-width=".7"/>
<path d="M334.8 178.6V185.6A8.8 4 0 0 0 352.40000000000003 185.6V178.6Z" fill="url(#g9)" stroke="#ffffff" stroke-width=".8"/>
<ellipse cx="343.6" cy="178.6" rx="8.8" ry="4" fill="#969696" stroke="#ffffff" stroke-width=".8"/>
<polygon points="354.1,216.8 377.5,203.3 408.3,222.3 385.0,236.1" fill="#8f8f8f" stroke="#ffffff" stroke-width="0.8" stroke-linejoin="round" />
<polygon points="354.1,216.8 385.0,236.1 385.0,237.5 354.1,218.2" fill="#b4b4b4" stroke="#ffffff" stroke-width="0.75" stroke-linejoin="round" />
<polygon points="408.3,222.3 385.0,236.1 385.0,237.5 408.3,223.7" fill="#b8b8b8" stroke="#ffffff" stroke-width="0.75" stroke-linejoin="round" />
<ellipse cx="375.6" cy="217.4" rx="10" ry="5" fill="#969696" stroke="#ffffff" stroke-width=".8"/>
<path d="M369.6 198V216A5.4 2.6 0 0 0 380.6 216V198Z" fill="url(#g10)" stroke="#ffffff" stroke-width=".8"/>
<polygon points="408.5,193.7 408.7,191.3 409.4,188.7 410.5,186.1 411.9,183.6 413.6,181.4 415.5,179.5 417.5,178.1 419.5,177.2 421.4,176.9 423.1,177.1 443.6,188.9 445.0,189.8 446.1,191.1 446.8,192.9 447.0,195.1 446.8,197.5 446.1,200.1 445.0,202.7 443.6,205.2 441.9,207.4 440.0,209.3 438.0,210.7 436.0,211.6 434.1,211.9 432.4,211.7 411.9,199.9 410.5,199.1 409.4,197.7 408.7,195.9" fill="url(#g11)" stroke="#ffffff" stroke-width="0.8" stroke-linejoin="round" />
<path d="M413 180.5Q407.5 188 412.5 198" fill="none" stroke="#ffffff" stroke-width=".7"/>
<circle cx="375" cy="196" r="6.9" fill="#cacaca" stroke="#ffffff" stroke-width=".8"/>
<line x1="374.0" y1="194.5" x2="383.0" y2="199.7" stroke="#ffffff" stroke-width="13.9" stroke-linecap="butt"/>
<line x1="374.0" y1="194.5" x2="383.0" y2="199.7" stroke="url(#g12)" stroke-width="12.8" stroke-linecap="butt"/>
<line x1="383.0" y1="199.7" x2="394.5" y2="206.3" stroke="#ffffff" stroke-width="18.3" stroke-linecap="butt"/>
<line x1="383.0" y1="199.7" x2="394.5" y2="206.3" stroke="url(#g13)" stroke-width="17.2" stroke-linecap="butt"/>
<line x1="394.5" y1="206.3" x2="402.0" y2="210.6" stroke="#ffffff" stroke-width="12.3" stroke-linecap="butt"/>
<line x1="394.5" y1="206.3" x2="402.0" y2="210.6" stroke="url(#g14)" stroke-width="11.2" stroke-linecap="butt"/>
<line x1="402.0" y1="210.6" x2="410.0" y2="215.2" stroke="#ffffff" stroke-width="14.7" stroke-linecap="butt"/>
<line x1="402.0" y1="210.6" x2="410.0" y2="215.2" stroke="url(#g15)" stroke-width="13.6" stroke-linecap="butt"/>
<circle cx="410.5" cy="214.5" r="7.2" fill="#c8c8c8" stroke="#ffffff" stroke-width=".8"/>
<line x1="410.5" y1="214.5" x2="424.0" y2="206.7" stroke="#ffffff" stroke-width="14.3" stroke-linecap="butt"/>
<line x1="410.5" y1="214.5" x2="424.0" y2="206.7" stroke="url(#g16)" stroke-width="13.2" stroke-linecap="butt"/>
<line x1="424.0" y1="206.7" x2="436.0" y2="199.8" stroke="#ffffff" stroke-width="10.3" stroke-linecap="butt"/>
<line x1="424.0" y1="206.7" x2="436.0" y2="199.8" stroke="url(#g17)" stroke-width="9.2" stroke-linecap="butt"/>
<ellipse cx="415.6" cy="246.6" rx="4.4" ry="2.6" fill="#a0a0a0" stroke="#ffffff" stroke-width=".8"/><ellipse cx="415.6" cy="244.8" rx="4.4" ry="2.6" fill="#a8a8a8" stroke="#ffffff" stroke-width=".8"/><ellipse cx="415.6" cy="244.8" rx="2.2" ry="1.3" fill="#707070" stroke="#ffffff" stroke-width=".55"/>
<polygon points="473.0,185.5 505.0,167.0 536.0,185.0 504.0,203.5" fill="#909090" stroke="#ffffff" stroke-width="0.8" stroke-linejoin="round" />
<polygon points="504.0,203.5 536.0,185.0 536.0,186.4 504.0,204.9" fill="#b8b8b8" stroke="#ffffff" stroke-width="0.75" stroke-linejoin="round" />
<ellipse cx="511" cy="177.4" rx="5.6" ry="3.2" fill="#a0a0a0" stroke="#ffffff" stroke-width=".8"/><ellipse cx="511" cy="175.4" rx="5.6" ry="3.2" fill="#a8a8a8" stroke="#ffffff" stroke-width=".8"/><ellipse cx="511" cy="175.4" rx="3" ry="1.7" fill="#707070" stroke="#ffffff" stroke-width=".55"/>
<polygon points="421.5,172.0 438.0,162.8 452.0,171.0 435.5,180.2" fill="#a4a4a4" stroke="#ffffff" stroke-width="0.8" stroke-linejoin="round" />
<polygon points="421.5,172.0 435.5,180.2 435.5,199.0 429.0,195.3 429.0,190.0 421.5,185.6" fill="#6e6e6e" stroke="#ffffff" stroke-width="0.8" stroke-linejoin="round" />
<polygon points="452.0,171.0 435.5,180.2 435.5,199.0 452.0,189.6" fill="#8e8e8e" stroke="#ffffff" stroke-width="0.8" stroke-linejoin="round" />
<polyline points="426.0,174.6 442.5,165.4" fill="none" stroke="#ffffff" stroke-width="0.75" stroke-linecap="round" stroke-linejoin="round" />
<polyline points="430.5,177.3 447.0,168.1" fill="none" stroke="#ffffff" stroke-width="0.75" stroke-linecap="round" stroke-linejoin="round" />
<line x1="407" y1="160" x2="428" y2="172" stroke="#ffffff" stroke-width="7" stroke-linecap="round"/>
<line x1="407" y1="160" x2="428" y2="172" stroke="#b0b0b0" stroke-width="5.8" stroke-linecap="round"/>
<line x1="410" y1="160.2" x2="424" y2="168.2" stroke="#eeeeee" stroke-width="2" stroke-linecap="round"/>
<line x1="450.5" y1="175.5" x2="457.0" y2="179.2" stroke="#ffffff" stroke-width="11.5" stroke-linecap="butt"/>
<line x1="450.5" y1="175.5" x2="457.0" y2="179.2" stroke="url(#g19)" stroke-width="10.4" stroke-linecap="butt"/>
<line x1="457.0" y1="179.2" x2="465.0" y2="183.8" stroke="#ffffff" stroke-width="9.5" stroke-linecap="butt"/>
<line x1="457.0" y1="179.2" x2="465.0" y2="183.8" stroke="url(#g20)" stroke-width="8.4" stroke-linecap="butt"/>
<polygon points="498.0,191.0 512.0,183.0 528.0,192.0 514.0,200.0" fill="#c4c4c4" stroke="#ffffff" stroke-width="0.8" stroke-linejoin="round" />
<polygon points="498.0,191.0 514.0,200.0 514.0,207.0 498.0,198.0" fill="#9a9a9a" stroke="#ffffff" stroke-width="0.8" stroke-linejoin="round" />
<polygon points="528.0,192.0 514.0,200.0 514.0,207.0 528.0,199.0" fill="#b0b0b0" stroke="#ffffff" stroke-width="0.8" stroke-linejoin="round" />
<polyline points="500.5,192.4 514.5,184.4" fill="none" stroke="#ffffff" stroke-width="0.75" stroke-linecap="round" stroke-linejoin="round" />
<polyline points="503.0,193.8 517.0,185.8" fill="none" stroke="#ffffff" stroke-width="0.75" stroke-linecap="round" stroke-linejoin="round" />
<polyline points="505.5,195.2 519.5,187.2" fill="none" stroke="#ffffff" stroke-width="0.75" stroke-linecap="round" stroke-linejoin="round" />
<polygon points="520.0,197.0 531.0,191.0 537.0,212.0 526.0,220.0" fill="#7c7c7c" stroke="#ffffff" stroke-width="0.8" stroke-linejoin="round" />
<polygon points="529.0,214.0 543.0,206.0 555.0,213.0 555.0,224.0 541.0,232.0 529.0,225.0" fill="#808080" stroke="#ffffff" stroke-width="0.8" stroke-linejoin="round" />
<polygon points="529.0,214.0 543.0,206.0 555.0,213.0 541.0,221.0" fill="#a4a4a4" stroke="#ffffff" stroke-width="0.8" stroke-linejoin="round" />
<polygon points="541.0,221.0 555.0,213.0 555.0,224.0 541.0,232.0" fill="#6c6c6c" stroke="#ffffff" stroke-width="0.8" stroke-linejoin="round" />
<ellipse cx="549" cy="222.5" rx="3" ry="3.8" fill="#8a8a8a" stroke="#ffffff" stroke-width=".7"/>
<ellipse cx="528" cy="228" rx="9" ry="5" fill="#9a9a9a" stroke="#ffffff" stroke-width=".7"/>
<polygon points="444.5,246.0 455.0,239.5 481.0,254.5 470.5,261.5" fill="#a0a0a0" stroke="#ffffff" stroke-width="0.8" stroke-linejoin="round" />
<polygon points="444.5,246.0 470.5,261.5 470.5,263.5 444.5,248.0" fill="#c4c4c4" stroke="#ffffff" stroke-width="0.75" stroke-linejoin="round" />
<polygon points="481.0,254.5 470.5,261.5 470.5,263.5 481.0,256.5" fill="#b4b4b4" stroke="#ffffff" stroke-width="0.75" stroke-linejoin="round" />
<polygon points="454.0,247.6 461.0,238.6 473.0,246.0 468.0,257.6" fill="#c8c8c8" stroke="#ffffff" stroke-width="0.8" stroke-linejoin="round" />
<ellipse cx="449.5" cy="246.4" rx="1.3" ry=".8" fill="#666" stroke="#fff" stroke-width=".55"/><ellipse cx="476.5" cy="256.2" rx="1.3" ry=".8" fill="#666" stroke="#fff" stroke-width=".55"/>
<polygon points="430.3,203.4 430.4,201.4 431.0,199.3 431.9,197.2 433.0,195.2 434.4,193.4 435.9,191.9 437.5,190.8 439.2,190.1 440.7,189.8 442.1,190.0 462.5,201.8 463.7,202.5 464.6,203.6 465.1,205.0 465.3,206.8 465.1,208.8 464.6,210.9 463.7,212.9 462.5,214.9 461.2,216.8 459.6,218.2 458.0,219.4 456.4,220.1 454.8,220.4 453.5,220.2 431.9,207.7 431.0,206.6 430.4,205.2" fill="url(#g21)" stroke="#ffffff" stroke-width="0.8" stroke-linejoin="round" />
<polygon points="465.3,206.8 465.1,205.0 464.6,203.6 463.7,202.5 462.5,201.8 461.2,201.6 459.6,201.9 458.0,202.6 456.4,203.7 454.8,205.3 453.5,207.1 452.3,209.0 451.4,211.1 450.9,213.2 450.7,215.2 450.9,217.0 451.4,218.4 452.3,219.5 453.5,220.2 454.8,220.4 456.4,220.1 458.0,219.4 459.6,218.3 461.2,216.7 462.5,214.9 463.7,213.0 464.6,210.9 465.1,208.8" fill="#8a8a8a" stroke="#ffffff" stroke-width="0.8" stroke-linejoin="round" />
<polygon points="441.0,220.8 441.4,216.2 442.7,211.3 444.7,206.4 447.4,201.8 450.6,197.6 454.2,194.1 458.0,191.4 461.8,189.7 465.4,189.1 468.6,189.6 471.3,191.1 503.3,209.6 505.3,212.1 506.6,215.6 507.0,219.7 506.6,224.3 505.3,229.2 503.3,234.0 500.6,238.7 497.4,242.9 493.8,246.4 490.0,249.1 486.2,250.8 482.6,251.4 479.4,250.9 476.7,249.4 444.7,230.9 442.7,228.3 441.4,224.9" fill="url(#g22)" stroke="#ffffff" stroke-width="0.8" stroke-linejoin="round" />
<polygon points="507.0,219.7 506.5,215.6 505.3,212.1 503.3,209.6 500.6,208.0 497.4,207.6 493.8,208.2 490.0,209.9 486.2,212.5 482.6,216.1 479.4,220.3 476.7,224.9 474.7,229.8 473.5,234.7 473.0,239.3 473.5,243.4 474.7,246.8 476.7,249.4 479.4,250.9 482.6,251.4 486.2,250.8 490.0,249.1 493.8,246.4 497.4,242.9 500.6,238.7 503.3,234.0 505.3,229.1 506.5,224.3" fill="#8a8a8a" stroke="#ffffff" stroke-width="0.8" stroke-linejoin="round" />
<polygon points="472.0,239.9 472.4,235.0 473.8,229.8 475.9,224.6 478.8,219.7 482.2,215.2 486.0,211.5 490.0,208.7 494.0,206.9 497.8,206.2 501.2,206.7 515.2,214.8 518.1,216.5 520.2,219.2 521.6,222.8 522.0,227.2 521.6,232.1 520.2,237.2 518.1,242.4 515.2,247.3 511.8,251.8 508.0,255.5 504.0,258.4 500.0,260.1 496.2,260.8 492.8,260.3 489.9,258.7 478.8,252.2 475.9,250.6 473.8,247.9 472.4,244.2" fill="url(#g23)" stroke="#ffffff" stroke-width="0.8" stroke-linejoin="round" />
<polygon points="522.0,227.2 521.6,222.8 520.2,219.2 518.1,216.5 515.2,214.8 511.8,214.3 508.0,215.0 504.0,216.8 500.0,219.6 496.2,223.3 492.8,227.8 489.9,232.7 487.8,237.9 486.4,243.1 486.0,248.0 486.4,252.3 487.8,256.0 489.9,258.7 492.8,260.3 496.2,260.8 500.0,260.2 504.0,258.4 508.0,255.5 511.8,251.8 515.2,247.3 518.1,242.4 520.2,237.2 521.6,232.0" fill="#8a8a8a" stroke="#ffffff" stroke-width="0.8" stroke-linejoin="round" />
<polygon points="487.2,247.3 487.6,242.7 488.9,237.9 490.9,233.1 493.5,228.4 496.7,224.3 500.3,220.8 504.0,218.2 507.7,216.5 511.3,215.9 514.5,216.3 518.5,218.7 521.1,220.2 523.1,222.7 524.4,226.1 524.8,230.2 524.4,234.7 523.1,239.5 521.1,244.4 518.5,249.0 515.3,253.1 511.7,256.6 508.0,259.3 504.3,260.9 500.7,261.6 497.5,261.1 494.9,259.6 490.9,257.2 488.9,254.7 487.6,251.3" fill="url(#g24)" stroke="#ffffff" stroke-width="0.8" stroke-linejoin="round" />
<polygon points="524.8,230.2 524.4,226.1 523.1,222.7 521.1,220.2 518.5,218.7 515.3,218.2 511.7,218.8 508.0,220.5 504.3,223.1 500.7,226.6 497.5,230.7 494.9,235.4 492.9,240.2 491.6,245.0 491.2,249.6 491.6,253.6 492.9,257.0 494.9,259.5 497.5,261.1 500.7,261.6 504.3,260.9 508.0,259.3 511.7,256.6 515.3,253.1 518.5,249.0 521.1,244.4 523.1,239.5 524.4,234.7" fill="#d4d4d4" stroke="#ffffff" stroke-width="0.8" stroke-linejoin="round" />
<polygon points="523.2,231.1 522.9,227.4 521.7,224.3 519.9,222.0 517.5,220.6 514.6,220.2 511.4,220.7 508.0,222.3 504.6,224.7 501.4,227.8 498.5,231.6 496.1,235.8 494.3,240.2 493.1,244.5 492.8,248.7 493.1,252.4 494.3,255.4 496.1,257.7 498.5,259.1 501.4,259.5 504.6,259.0 508.0,257.5 511.4,255.1 514.6,251.9 517.5,248.1 519.9,244.0 521.7,239.6 522.9,235.2" fill="#8b8b8b" stroke="#ffffff" stroke-width="1" stroke-linejoin="round" />
<rect x="522.4" y="143.4" width="5.2" height="21.6" fill="url(#g25)" stroke="#ffffff" stroke-width=".7"/>
<rect x="521.5" y="146.4" width="7" height="4.5" rx="1" fill="url(#g25)" stroke="#ffffff" stroke-width=".7"/>
<rect x="521.6" y="158.0" width="6.8" height="7" rx="1.6" fill="url(#g25)" stroke="#ffffff" stroke-width=".7"/>
<line x1="524.0" y1="134.4" x2="538.5" y2="127.5" stroke="#ffffff" stroke-width="6" stroke-linecap="round"/>
<line x1="524.0" y1="134.4" x2="538.5" y2="127.5" stroke="#b4b4b4" stroke-width="4.8" stroke-linecap="round"/>
<ellipse cx="524.0" cy="134.4" rx="11.0" ry="10.4" fill="url(#g26)" stroke="#ffffff" stroke-width=".8"/>
<ellipse cx="524.0" cy="134.4" rx="8.8" ry="8.4" fill="none" stroke="#fff" stroke-width=".55" opacity=".8"/>
<ellipse cx="524.0" cy="134.4" rx="6.6" ry="6.3" fill="none" stroke="#fff" stroke-width=".55" opacity=".8"/>
<ellipse cx="524.0" cy="134.4" rx="4.4" ry="4.2" fill="none" stroke="#fff" stroke-width=".55" opacity=".8"/>
<rect x="541.4" y="154.6" width="5.2" height="21.4" fill="url(#g27)" stroke="#ffffff" stroke-width=".7"/>
<rect x="540.5" y="157.6" width="7" height="4.5" rx="1" fill="url(#g27)" stroke="#ffffff" stroke-width=".7"/>
<rect x="540.6" y="169.0" width="6.8" height="7" rx="1.6" fill="url(#g27)" stroke="#ffffff" stroke-width=".7"/>
<line x1="543.6" y1="145.6" x2="558.5" y2="139.0" stroke="#ffffff" stroke-width="6" stroke-linecap="round"/>
<line x1="543.6" y1="145.6" x2="558.5" y2="139.0" stroke="#b4b4b4" stroke-width="4.8" stroke-linecap="round"/>
<ellipse cx="543.6" cy="145.6" rx="11.0" ry="10.4" fill="url(#g28)" stroke="#ffffff" stroke-width=".8"/>
<ellipse cx="543.6" cy="145.6" rx="8.8" ry="8.4" fill="none" stroke="#fff" stroke-width=".55" opacity=".8"/>
<ellipse cx="543.6" cy="145.6" rx="6.6" ry="6.3" fill="none" stroke="#fff" stroke-width=".55" opacity=".8"/>
<ellipse cx="543.6" cy="145.6" rx="4.4" ry="4.2" fill="none" stroke="#fff" stroke-width=".55" opacity=".8"/>
<ellipse cx="558" cy="186.9" rx="11.2" ry="5.2" fill="#9a9a9a" stroke="#ffffff" stroke-width=".8"/>
<ellipse cx="558" cy="185.9" rx="10.2" ry="4.6" fill="#8f8f8f" stroke="#ffffff" stroke-width=".7"/>
<path d="M549.2 178.4V185.4A8.8 4 0 0 0 566.8 185.4V178.4Z" fill="url(#g29)" stroke="#ffffff" stroke-width=".8"/>
<ellipse cx="558" cy="178.4" rx="8.8" ry="4" fill="#969696" stroke="#ffffff" stroke-width=".8"/>
<rect x="597.6" y="178" width="8.8" height="19" rx="1.5" fill="url(#g30)" stroke="#ffffff" stroke-width=".7"/>
<ellipse cx="602" cy="196.5" rx="5" ry="3.4" fill="#b4b4b4" stroke="#ffffff" stroke-width=".7"/>
<path d="M595.8 160V180A6.2 3 0 0 0 608.2 180V160Z" fill="url(#g30)" stroke="#ffffff" stroke-width=".8"/>
<ellipse cx="602" cy="160" rx="6.2" ry="3" fill="#a4a4a4" stroke="#ffffff" stroke-width=".8"/>
<line x1="598.8" y1="300.3" x2="581" y2="290.6" stroke="#2fae3a" stroke-width="2.4"/>
<line x1="598.8" y1="300.3" x2="618" y2="290.6" stroke="#a8282c" stroke-width="2.4"/>
<line x1="598.8" y1="301.1" x2="598.8" y2="275" stroke="#1f49b0" stroke-width="2.4"/>
<text x="579" y="287" font-size="7" fill="#3fae4a" font-family="Liberation Sans,sans-serif">Y</text>
<text x="617" y="287.4" font-size="7" fill="#a83236" font-family="Liberation Sans,sans-serif">X</text>
<text x="600.4" y="276.4" font-size="7" fill="#3a78e0" font-family="Liberation Sans,sans-serif">Z</text>
<defs><radialGradient id="vcs" cx="965" cy="116" r="22" gradientUnits="userSpaceOnUse" gradientTransform="translate(0 52) scale(1 .55)"><stop offset="0" stop-color="#15191f" stop-opacity=".9"/><stop offset="1" stop-color="#15191f" stop-opacity="0"/></radialGradient></defs><ellipse cx="965" cy="118" rx="30" ry="16.5" fill="none" stroke="#3c434f" stroke-width="8"/><ellipse cx="965" cy="117" rx="25" ry="12.5" fill="url(#vcs)"/><defs><linearGradient id="vc1" x1="0" y1="0" x2="1" y2="1"><stop offset="0" stop-color="#c4c6cc"/><stop offset="1" stop-color="#abaeb5"/></linearGradient><linearGradient id="vc2" x1="0" y1="0" x2="1" y2="1"><stop offset="0" stop-color="#b9bbc1"/><stop offset="1" stop-color="#9c9fa7"/></linearGradient><linearGradient id="vc3" x1="0" y1="0" x2="0" y2="1"><stop offset="0" stop-color="#acafb5"/><stop offset="1" stop-color="#979aa2"/></linearGradient></defs><polygon points="965,80 984,90 965,99.4 946.4,90" fill="url(#vc1)"/><polygon points="946.4,90 965,99.4 965,122 948.4,112.4" fill="url(#vc2)"/><polygon points="984,90 965,99.4 965,122 982.4,112.4" fill="url(#vc3)"/><polyline points="946.4,90 965,99.4 984,90" fill="none" stroke="#d0d3d8" stroke-width=".6"/><line x1="965" y1="99.4" x2="965" y2="122" stroke="#c6c9ce" stroke-width=".6"/><text font-family="Liberation Sans,Noto Sans CJK JP,sans-serif" text-anchor="middle" dominant-baseline="central" font-weight="500" font-size="10" fill="#30333a" transform="matrix(.92 -.42 -.18 .8 966.6 89.6)">上</text><text font-family="Liberation Sans,Noto Sans CJK JP,sans-serif" text-anchor="middle" dominant-baseline="central" font-weight="500" font-size="10" fill="#30333a" transform="matrix(.9 .46 0 1 956.4 105.6)">左</text><text font-family="Liberation Sans,Noto Sans CJK JP,sans-serif" text-anchor="middle" dominant-baseline="central" font-weight="500" font-size="10" fill="#30333a" transform="matrix(.9 -.46 0 1 974.2 105.4)">前</text><text font-family="Liberation Sans,Noto Sans CJK JP,sans-serif" text-anchor="middle" dominant-baseline="central" font-weight="500" font-size="5.5" fill="#7c818c" transform="matrix(.9 -.35 .4 .9 944.2 99)">北</text><text font-family="Liberation Sans,Noto Sans CJK JP,sans-serif" text-anchor="middle" dominant-baseline="central" font-weight="500" font-size="5.5" fill="#7c818c" transform="matrix(.9 .35 -.4 .9 987 99)">東</text><text font-family="Liberation Sans,Noto Sans CJK JP,sans-serif" text-anchor="middle" dominant-baseline="central" font-weight="500" font-size="8" fill="#cdd1d8" transform="matrix(.9 .38 -.45 .9 941 128)">西</text><text font-family="Liberation Sans,Noto Sans CJK JP,sans-serif" text-anchor="middle" dominant-baseline="central" font-weight="500" font-size="8" fill="#cdd1d8" transform="matrix(.9 -.38 .45 .9 990.3 128)">南</text><rect x="953" y="147.6" width="23.4" height="8" rx="1.6" fill="#9193a0"/><rect x="967.6" y="149.4" width="6.4" height="4.4" rx=".8" fill="none" stroke="#a8abb6" stroke-width=".6"/><path d="M969.6 151l1.2 1.2 1.2-1.2" fill="none" stroke="#a8abb6" stroke-width=".5"/></svg>
<div class="menu" style="left:23.5px;top:68.5px;width:104.5px;height:66.2px"></div>
<div class="a" style="left:27px;top:82px;width:96.6px;height:11px;background:#eeeeee;border-radius:2px"></div>
<div class="a" style="left:29px;top:95.9px;width:93px;height:1px;background:#dcdcdc;"></div>
<div class="menu" style="left:124.8px;top:79.8px;width:111.7px;height:177.2px"></div>
<div class="a" style="left:127.6px;top:110.2px;width:105.7px;height:11.4px;background:#eeeeee;border-radius:2px"></div>
<div class="a" style="left:129.5px;top:95.7px;width:102px;height:1px;background:#dcdcdc;"></div>
<div class="a" style="left:129.5px;top:241.9px;width:102px;height:1px;background:#dcdcdc;"></div>
<svg width="1024" height="550" viewBox="0 0 1024 550"><g fill="none" stroke="#444" stroke-width=".8"><path d="M116.8 85.6l1.9 1.9-1.9 1.9"/><path d="M31.3 104.4l1.3 1.4 2.6-3.2"/><path d="M225.6 85.6l1.9 1.9-1.9 1.9" stroke="#aaa"/></g></svg>
<svg width="1024" height="550" viewBox="0 0 1024 550"><path d="M846.3 486.4H983.7Q991.7 486.4 991.7 494.4V521.4Q991.7 529.4 983.7 529.4H956.5L956 536.6L947.5 529.4H846.3Q838.3 529.4 838.3 521.4V494.4Q838.3 486.4 846.3 486.4Z" fill="#ffffe1" stroke="#222" stroke-width=".7"/><circle cx="847.5" cy="495.5" r="4" fill="#1e88e5"/><rect x="847" y="494.8" width="1" height="3" fill="#fff"/><rect x="847" y="493" width="1" height="1.1" fill="#fff"/><rect x="978.8" y="492.4" width="8.1" height="7.1" fill="#f4f4e6" stroke="#888" stroke-width=".5"/><path d="M981 494.2l3.6 3.6M984.6 494.2l-3.6 3.6" stroke="#111" stroke-width="1.1"/></svg>
<span class="t" style="left:168.00px;top:4.85px;font-size:7.5px;color:#3aa0ea;transform:scaleX(0.8667);">共有</span>
<span class="t" style="left:506.70px;top:4.95px;font-size:7.3px;color:#e4e7ec;transform:scaleX(0.8617);">Autodesk AutoCAD 2027&nbsp;&nbsp;&nbsp;&nbsp;model1.dwg</span>
<span class="t" style="left:12.10px;top:4.30px;font-size:7px;color:#ffffff;font-weight:bold;transform:scaleX(1.1200);">A</span>
<span class="t" style="left:9.50px;top:18.85px;font-size:7.5px;color:#b9bfca;transform:scaleX(0.6375);">ファイル(F)</span>
<span class="t" style="left:48.00px;top:18.85px;font-size:7.5px;color:#b9bfca;transform:scaleX(0.8000);">編集(E)</span>
<span class="t" style="left:81.00px;top:18.85px;font-size:7.5px;color:#b9bfca;transform:scaleX(0.8400);">表示(V)</span>
<span class="t" style="left:114.50px;top:18.85px;font-size:7.5px;color:#b9bfca;transform:scaleX(0.8409);">挿入(I)</span>
<span class="t" style="left:146.00px;top:18.85px;font-size:7.5px;color:#b9bfca;transform:scaleX(0.8462);">形式(O)</span>
<span class="t" style="left:181.00px;top:18.85px;font-size:7.5px;color:#b9bfca;transform:scaleX(0.6719);">ツール(T)</span>
<span class="t" style="left:215.50px;top:18.85px;font-size:7.5px;color:#b9bfca;transform:scaleX(0.8600);">作成(D)</span>
<span class="t" style="left:250.00px;top:18.85px;font-size:7.5px;color:#b9bfca;transform:scaleX(0.8600);">寸法(N)</span>
<span class="t" style="left:284.80px;top:18.85px;font-size:7.5px;color:#b9bfca;transform:scaleX(0.8615);">修正(M)</span>
<span class="t" style="left:320.50px;top:18.85px;font-size:7.5px;color:#b9bfca;transform:scaleX(0.6339);">パラメトリック(P)</span>
<span class="t" style="left:372.80px;top:18.85px;font-size:7.5px;color:#b9bfca;transform:scaleX(0.6480);">ウィンドウ(W)</span>
<span class="t" style="left:418.50px;top:18.85px;font-size:7.5px;color:#b9bfca;transform:scaleX(0.8919);">（＝＝♪(R)</span>
<span class="t" style="left:464.80px;top:18.85px;font-size:7.5px;color:#b9bfca;transform:scaleX(0.7333);">ヘルプ(H)</span>
<span class="t" style="left:502.00px;top:18.85px;font-size:7.5px;color:#b9bfca;transform:scaleX(0.7667);">Express</span>
<span class="t" style="left:8.80px;top:32.15px;font-size:7.5px;color:#b9bfca;transform:scaleX(0.6818);">ホーム</span>
<span class="t" style="left:34.50px;top:32.15px;font-size:7.5px;color:#b9bfca;transform:scaleX(0.8200);">挿入</span>
<span class="t" style="left:57.50px;top:32.15px;font-size:7.5px;color:#b9bfca;transform:scaleX(0.8333);">注釈</span>
<span class="t" style="left:80.50px;top:32.15px;font-size:7.5px;color:#b9bfca;transform:scaleX(0.7059);">3D ツール</span>
<span class="t" style="left:115.00px;top:32.15px;font-size:7.5px;color:#b9bfca;transform:scaleX(0.6346);">ビジュアライズ</span>
<span class="t" style="left:158.80px;top:32.15px;font-size:7.5px;color:#b9bfca;transform:scaleX(0.8267);">表示</span>
<span class="t" style="left:181.80px;top:32.15px;font-size:7.5px;color:#b9bfca;transform:scaleX(0.8467);">管理</span>
<span class="t" style="left:205.50px;top:32.15px;font-size:7.5px;color:#b9bfca;transform:scaleX(0.8333);">出力</span>
<span class="t" style="left:228.80px;top:32.15px;font-size:7.5px;color:#b9bfca;transform:scaleX(0.6233);">アドイン</span>
<span class="t" style="left:258.00px;top:32.15px;font-size:7.5px;color:#b9bfca;transform:scaleX(0.6111);">コラボレート</span>
<span class="t" style="left:296.80px;top:32.15px;font-size:7.5px;color:#b9bfca;transform:scaleX(0.8000);">自動化</span>
<span class="t" style="left:326.20px;top:32.15px;font-size:7.5px;color:#b9bfca;transform:scaleX(0.7830);">Express Tools</span>
<span class="t" style="left:374.00px;top:32.15px;font-size:7.5px;color:#ffffff;transform:scaleX(0.6974);">注目アプリ</span>
<span class="t" style="left:33.20px;top:44.65px;font-size:7.5px;color:#d4d8e0;transform:scaleX(0.8229);">Drawing1*</span>
<span class="t" style="left:82.00px;top:44.65px;font-size:7.5px;color:#ffffff;transform:scaleX(0.8214);">model1*</span>
<span class="t" style="left:18.00px;top:60.95px;font-size:7.5px;color:#e8eaee;transform:scaleX(0.9333);">[<span style="color:#d4b828;font-weight:bold">−</span>]</span>
<span class="t" style="left:26.70px;top:60.95px;font-size:7.5px;color:#e8eaee;transform:scaleX(0.7466);">[南西アイソメ ビュー]</span>
<span class="t" style="left:81.30px;top:60.95px;font-size:7.5px;color:#e8eaee;transform:scaleX(0.6942);">[シェードとエッジ (高速)]</span>
<span class="t" style="left:43.90px;top:71.85px;font-size:7.3px;color:#1b1b1b;transform:scaleX(0.6621);">ビューポートを復元</span>
<span class="t" style="left:43.90px;top:83.75px;font-size:7.3px;color:#1b1b1b;transform:scaleX(0.7055);">ビューポート設定一覧</span>
<span class="t" style="left:43.90px;top:100.45px;font-size:7.3px;color:#1b1b1b;transform:scaleX(0.8364);">ViewCube</span>
<span class="t" style="left:43.90px;top:112.25px;font-size:7.3px;color:#1b1b1b;transform:scaleX(0.8288);">SteeringWheels</span>
<span class="t" style="left:43.90px;top:123.55px;font-size:7.3px;color:#1b1b1b;transform:scaleX(0.6338);">ナビゲーション バー</span>
<span class="t" style="left:144.90px;top:83.75px;font-size:7.3px;color:#9a9a9a;transform:scaleX(0.6678);">カスタム ビューポート設定</span>
<span class="t" style="left:144.90px;top:100.35px;font-size:7.3px;color:#1b1b1b;transform:scaleX(0.8067);">単一</span>
<span class="t" style="left:144.90px;top:112.15px;font-size:7.3px;color:#1b1b1b;transform:scaleX(0.8469);">2 分割: 縦</span>
<span class="t" style="left:144.90px;top:123.85px;font-size:7.3px;color:#1b1b1b;transform:scaleX(0.8469);">2 分割: 横</span>
<span class="t" style="left:144.90px;top:135.65px;font-size:7.3px;color:#1b1b1b;transform:scaleX(0.8469);">3 分割: 右</span>
<span class="t" style="left:144.90px;top:147.35px;font-size:7.3px;color:#1b1b1b;transform:scaleX(0.8469);">3 分割: 左</span>
<span class="t" style="left:144.90px;top:159.15px;font-size:7.3px;color:#1b1b1b;transform:scaleX(0.8469);">3 分割: 上</span>
<span class="t" style="left:144.90px;top:170.85px;font-size:7.3px;color:#1b1b1b;transform:scaleX(0.8469);">3 分割: 下</span>
<span class="t" style="left:144.90px;top:182.65px;font-size:7.3px;color:#1b1b1b;transform:scaleX(0.8469);">3 分割: 縦</span>
<span class="t" style="left:144.90px;top:194.35px;font-size:7.3px;color:#1b1b1b;transform:scaleX(0.8469);">3 分割: 横</span>
<span class="t" style="left:144.90px;top:206.15px;font-size:7.3px;color:#1b1b1b;transform:scaleX(0.8487);">4 分割: 等分</span>
<span class="t" style="left:144.90px;top:217.85px;font-size:7.3px;color:#1b1b1b;transform:scaleX(0.8469);">4 分割: 右</span>
<span class="t" style="left:144.90px;top:229.65px;font-size:7.3px;color:#1b1b1b;transform:scaleX(0.8469);">4 分割: 左</span>
<span class="t" style="left:144.90px;top:245.85px;font-size:7.3px;color:#1b1b1b;transform:scaleX(0.8600);">環境設定...</span>
<span class="t" style="left:7.60px;top:188.10px;font-size:7px;color:#dfe2e8;transform-origin:0 50%;transform:rotate(-90deg) scaleX(0.6556);">画層プロパティ管理</span>
<span class="t" style="left:7.60px;top:419.10px;font-size:7px;color:#dfe2e8;transform-origin:0 50%;transform:rotate(-90deg) scaleX(0.6571);">プロパティ</span>
<span class="t" style="left:1015.60px;top:250.50px;font-size:7px;color:#dfe2e8;transform-origin:0 50%;transform:rotate(90deg) scaleX(0.6500);">ツール パレット - すべてのパレット</span>
<span class="t" style="left:955.30px;top:148.30px;font-size:7px;color:#2c303a;transform:scaleX(0.6313);">WCS</span>
<span class="t" style="left:29.90px;top:485.90px;font-size:8px;color:#222;font-family:'Liberation Mono','Noto Sans Mono CJK JP','Noto Sans CJK JP',monospace;transform:scaleX(0.6189);">コマンド:</span>
<span class="t" style="left:29.90px;top:493.50px;font-size:8px;color:#222;font-family:'Liberation Mono','Noto Sans Mono CJK JP','Noto Sans CJK JP',monospace;transform:scaleX(0.7130);">コマンド: もう一方のコーナーを指定 または [フェンス(F)/ポリゴン窓(WP)/ポリゴン交差(CP)]:</span>
<span class="t" style="left:29.90px;top:501.20px;font-size:8px;color:#222;font-family:'Liberation Mono','Noto Sans Mono CJK JP','Noto Sans CJK JP',monospace;transform:scaleX(0.6189);">コマンド:</span>
<span class="t" style="left:29.90px;top:508.80px;font-size:8px;color:#222;font-family:'Liberation Mono','Noto Sans Mono CJK JP','Noto Sans CJK JP',monospace;transform:scaleX(0.6189);">コマンド:</span>
<span class="t" style="left:48.00px;top:520.85px;font-size:7.5px;color:#8a8a8a;transform:scaleX(0.7133);"><span style="display:inline-block;transform:skewX(-14deg)">ここにコマンドを入力</span></span>
<span class="t" style="left:33.30px;top:535.25px;font-size:7.5px;color:#ffffff;transform:scaleX(0.6652);">モデル</span>
<span class="t" style="left:62.00px;top:535.25px;font-size:7.5px;color:#b9bfca;transform:scaleX(0.7867);">表紙</span>
<span class="t" style="left:87.40px;top:535.25px;font-size:7.5px;color:#b9bfca;transform:scaleX(0.7913);">仕様書</span>
<span class="t" style="left:121.20px;top:535.25px;font-size:7.5px;color:#b9bfca;transform:scaleX(0.9000);">1</span>
<span class="t" style="left:141.00px;top:535.25px;font-size:7.5px;color:#b9bfca;transform:scaleX(0.9000);">2</span>
<span class="t" style="left:160.80px;top:535.25px;font-size:7.5px;color:#b9bfca;transform:scaleX(0.9000);">3</span>
<span class="t" style="left:180.60px;top:535.25px;font-size:7.5px;color:#b9bfca;transform:scaleX(0.9000);">4</span>
<span class="t" style="left:200.40px;top:535.25px;font-size:7.5px;color:#b9bfca;transform:scaleX(0.9000);">5</span>
<span class="t" style="left:220.20px;top:535.25px;font-size:7.5px;color:#b9bfca;transform:scaleX(0.9000);">6</span>
<span class="t" style="left:240.00px;top:535.25px;font-size:7.5px;color:#b9bfca;transform:scaleX(0.9000);">7</span>
<span class="t" style="left:259.80px;top:535.25px;font-size:7.5px;color:#b9bfca;transform:scaleX(0.9000);">8</span>
<span class="t" style="left:279.60px;top:535.25px;font-size:7.5px;color:#b9bfca;transform:scaleX(0.9000);">9</span>
<span class="t" style="left:296.80px;top:535.25px;font-size:7.5px;color:#b9bfca;transform:scaleX(0.9000);">10</span>
<span class="t" style="left:316.60px;top:535.25px;font-size:7.5px;color:#b9bfca;transform:scaleX(0.9000);">11</span>
<span class="t" style="left:582.90px;top:535.40px;font-size:7.2px;color:#e8eaee;transform:scaleX(0.6727);">モデル</span>
<span class="t" style="left:846.80px;top:535.40px;font-size:7.2px;color:#e8eaee;transform:scaleX(0.8500);">1:40</span>
<span class="t" style="left:857.80px;top:491.95px;font-size:7.3px;color:#111;font-weight:bold;transform:scaleX(0.7103);">印刷とパブリッシュのジョブの完了</span>
<span class="t" style="left:846.90px;top:503.85px;font-size:7.3px;color:#111;transform:scaleX(0.6977);">エラーや警告はありません</span>
<span class="t" style="left:846.90px;top:514.55px;font-size:7.3px;color:#1a1ae0;text-decoration:underline;transform:scaleX(0.7046);">印刷とパブリッシュの詳細を表示するにはここをクリック...</span>
<svg width="1024" height="550" viewBox="0 0 1024 550" style="pointer-events:none"><path fill-rule="evenodd" fill="#1b6fa0" d="M0 0H1024V550H0Z M1.2 6.5V546.4Q1.2 548.3 3.2 548.3H1020.8Q1022.8 548.3 1022.8 546.4V6.5Q1022.8 1.1 1017.5 1.1H6.5Q1.2 1.1 1.2 6.5Z"/><path fill="#eef3f7" d="M0 0H4.5Q0 0 0 4.5Z M1024 0V4.5Q1024 0 1019.5 0Z"/></svg>
</body></html>
